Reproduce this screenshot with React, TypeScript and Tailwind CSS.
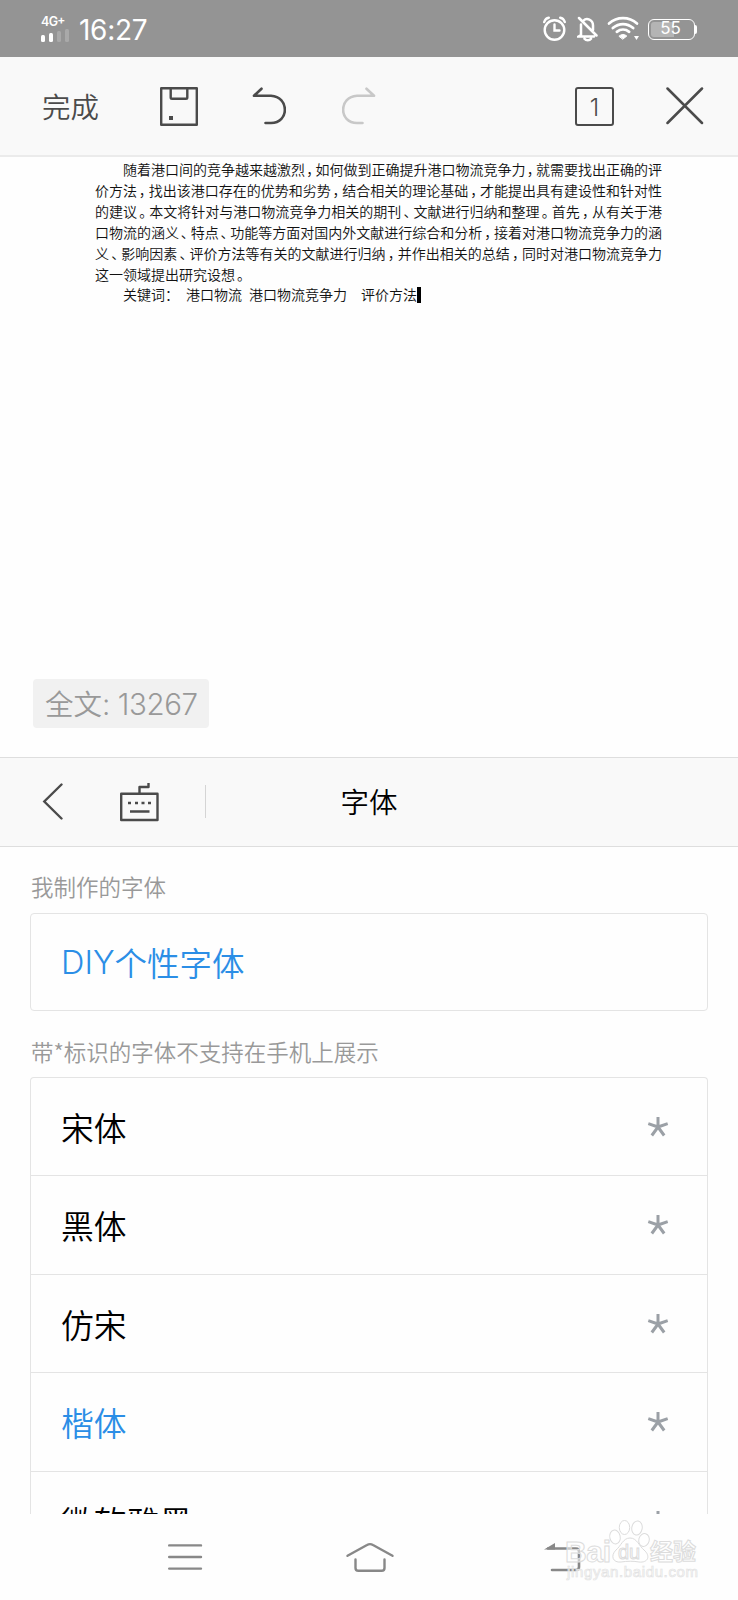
import type { ReactNode } from "react"

const documentLines: { text: string; indent?: boolean }[] = [
    { text: "随着港口间的竞争越来越激烈，如何做到正确提升港口物流竞争力，就需要找出正确的评", indent: true },
    { text: "价方法，找出该港口存在的优势和劣势，结合相关的理论基础，才能提出具有建设性和针对性" },
    { text: "的建议。本文将针对与港口物流竞争力相关的期刊、文献进行归纳和整理。首先，从有关于港" },
    { text: "口物流的涵义、特点、功能等方面对国内外文献进行综合和分析，接着对港口物流竞争力的涵" },
    { text: "义、影响因素、评价方法等有关的文献进行归纳，并作出相关的总结，同时对港口物流竞争力" },
]

const fonts = [
    { name: "宋体", active: false },
    { name: "黑体", active: false },
    { name: "仿宋", active: false },
    { name: "楷体", active: true },
    { name: "微软雅黑", active: false },
]

// Punctuation takes up the slack so both edges of the line stay flush
const DocumentLine = ({ text, indent }: { text: string; indent?: boolean }) => (
    <p className={`flex whitespace-nowrap ${indent ? "pl-7" : ""}`}>
        {text.split(/([，。、])/).map((part, i) => (
            <span key={i} className={i % 2 ? "w-0 flex-1 pr-px text-center [font-feature-settings:'halt']" : "flex-none"}>{part}</span>
        ))}
    </p>
)

const StatusBar = () => (
    <div className="flex h-[57px] flex-none items-center bg-[#949494] text-white">
        <div className="ml-[41px] w-[30px]">
            <p className="font-['Inter'] text-[12.5px] leading-[12px] font-semibold tracking-[-0.7px]">4G<span className="relative -top-[2px] text-[12px]">+</span></p>
            <div className="flex h-[14px] items-end gap-[4px]">
                <div className="h-[7px] w-[4px] rounded-[1.5px] bg-white" />
                <div className="h-[9px] w-[4px] rounded-[1.5px] bg-white" />
                <div className="h-[11px] w-[4px] rounded-[1.5px] bg-white/20" />
                <div className="h-[13px] w-[4px] rounded-[1.5px] bg-white/20" />
            </div>
        </div>
        <span className="ml-[8px] pt-[3px] font-['Inter'] text-[28px] tracking-[-0.3px]">16:27</span>
        <svg className="ml-auto" width="24" height="26" viewBox="0 0 24 26" fill="none" stroke="currentColor" strokeWidth="2.4" strokeLinecap="round">
            <circle cx="11.5" cy="14" r="9.8" />
            <path d="M11.5 8.5V14.5H16.5M1.2 6C2 3.5 4 2 5.8 1.7M21.8 6C21 3.5 19 2 17.2 1.7" />
        </svg>
        <svg className="ml-[10px]" width="22" height="26" viewBox="0 0 22 26" fill="none" stroke="currentColor" strokeWidth="2.5" strokeLinecap="round">
            <path d="M6.5 4.7C9.5 1.5 16 3.5 16 9.5V14M4 8.5V19L1.5 20.5H17M7.5 22.8C9 24.8 12.5 24.8 14 22.8M2 2L19.5 19.5" />
        </svg>
        <svg className="ml-[8px]" width="33" height="26" viewBox="0 0 33 26" fill="none" stroke="currentColor" strokeWidth="2.7" strokeLinecap="round">
            <path d="M2 7.5C10 0.3 22 0.3 30 7.5M5.8 12C12 6.7 20 6.7 26.2 12M9.8 15.8C13.5 13 18.5 13 22.2 15.8" />
            <path d="M12.2 20Q16 16.8 19.8 20L16 23Z" fill="currentColor" strokeWidth="1" />
            <path d="M27 20H32L29.5 24Z" fill="currentColor" stroke="none" />
        </svg>
        <div className="mr-[41px] ml-[8px] flex items-center pt-px">
            <div className="flex h-[21px] w-[47px] rounded-[6px] border-[1.5px] border-white p-[2px]">
                <div className="flex w-full items-center justify-center rounded-[3px] bg-linear-to-r from-white/30 from-55% to-transparent to-55% pr-0.5 font-['Inter'] text-[17px]">55</div>
            </div>
            <div className="h-[9px] w-[2px] rounded-r bg-white" />
        </div>
    </div>
)

const Toolbar = () => (
    <header className="flex h-[100px] flex-none items-center border-b-2 border-[#ebebeb] bg-[#f9f9f9] text-[#4b4b4b]">
        <span className="ml-[42px] w-[60px] text-[28.5px] leading-none font-[350]">完成</span>
        <svg className="ml-[58px] flex-none" width="38" height="40" viewBox="0 0 38 40" fill="none" stroke="currentColor" strokeWidth="2.4" strokeLinejoin="round">
            <path d="M1.2 2.2H36.8V38.8H1.2ZM10.7 2V11.5Q10.7 12.8 12 12.8H26Q27.3 12.8 27.3 11.5V2" />
            <path d="M9 30H13V34H9Z" fill="currentColor" stroke="none" />
        </svg>
        <Undo className="ml-[54px]" />
        <Undo className="ml-[56px] -scale-x-100 text-[#c8c8c8]" />
        <div className="mr-[52px] ml-auto flex size-[39px] items-center justify-center rounded-[3px] border-[2.4px] border-current pt-1 font-['Inter'] text-[24px] font-light">1</div>
        <svg className="mr-[34px]" width="38" height="38" viewBox="0 0 38 38" fill="none" stroke="currentColor" strokeWidth="2.5" strokeLinecap="round">
            <path d="M1.5 1.5L36 36M36 1.5L1.5 36" />
        </svg>
    </header>
)

const Undo = ({ className }: { className: string }) => (
    <svg className={`flex-none ${className}`} width="34" height="38" viewBox="0 0 34 38" fill="none" stroke="currentColor" strokeWidth="2.6" strokeLinecap="round" strokeLinejoin="round">
        <path d="M9.5 1.7L2 8.8H19C37.5 9.8 37.5 36 19 36H13.5" />
    </svg>
)

const Label = ({ children }: { children: ReactNode }) => (
    <p className="ml-px text-[22.5px] leading-[26px] font-[350] whitespace-nowrap text-[#999]">{children}</p>
)

const Asterisk = () => (
    <svg className="mt-px" width="22" height="22" viewBox="0 0 22 22" fill="none" stroke="#9ba0a6" strokeWidth="3">
        <path d="M11 11V1M11 11L1.3 7.7M11 11L20.7 7.7M11 11L4.8 19.5M11 11L17.2 19.5" />
    </svg>
)

const Watermark = () => (
    <div className="absolute top-[3px] right-[34px] w-[140px] font-['Liberation_Sans'] text-white">
        <svg width="138" height="66" viewBox="0 0 138 66" fill="white" fillOpacity=".55" stroke="#dcdcdc" strokeWidth="1">
            <ellipse cx="51" cy="20" rx="5.2" ry="7" transform="rotate(-12 51 20)" />
            <ellipse cx="60.5" cy="10.5" rx="5.2" ry="7" />
            <ellipse cx="73" cy="11" rx="5.2" ry="7" transform="rotate(10 73 11)" />
            <ellipse cx="80" cy="23" rx="5.2" ry="6.5" transform="rotate(15 80 23)" />
            <path d="M66 21C59 21 57 29 52 33C46 39 49 46 57 45C63 44 70 44 75 45C84 46 87 39 80 33C75 29 73 21 66 21Z" />
            <text x="1" y="45" fontSize="30" fontWeight="bold" textLength="46">Bai</text>
            <text x="54" y="42" fontSize="20" textLength="22">du</text>
            <text x="86" y="43" fontSize="23" fontWeight="bold" fontFamily="Noto Sans CJK SC, sans-serif" textLength="46">经验</text>
            <text x="3" y="60" fontSize="15" textLength="131" stroke="#e2e2e2" strokeWidth=".7">jingyan.baidu.com</text>
        </svg>
    </div>
)

const App = () => {
    return (
        <div className="flex h-[1600px] w-[738px] flex-col overflow-hidden bg-[#fefefe] font-['Noto_Sans_CJK_SC',sans-serif] text-black">
            <StatusBar />
            <Toolbar />

            {/* Document */}
            <main className="flex h-[600px] flex-none flex-col pt-[2px]">
                <div className="ml-[95px] w-[567px] text-[14px] leading-[20.9px] font-[350] text-[#111]">
                    {documentLines.map((line) => (
                        <DocumentLine key={line.text} {...line} />
                    ))}
                    <p>这一领域提出研究设想<span className="pl-0.5">。</span></p>
                    <p className="flex items-center pl-7">
                        <span className="w-[63px]">关键词：</span>
                        <span className="w-[63px]">港口物流</span>
                        <span className="w-[112px]">港口物流竞争力</span>
                        <span>评价方法</span>
                        <span className="h-4 w-1 bg-black" />
                    </p>
                </div>
                <div className="mt-auto mb-[29px] ml-[33px] flex h-[49px] w-[176px] items-center rounded-[4px] bg-[#f1f1f1] pl-[12px] text-[28.5px] font-[350] whitespace-nowrap text-[#999]">
                    全文<span className="pt-0.5 font-['Inter'] text-[29.5px] font-light tracking-[-0.4px]">: 13267</span>
                </div>
            </main>

            {/* Panel title */}
            <div className="grid h-[90px] flex-none grid-cols-3 items-center border-y border-[#dedede] bg-[#f9f9f9]">
                <div className="flex items-center text-[#4b4b4b]">
                    <svg className="ml-[42px]" width="21" height="38" viewBox="0 0 21 38" fill="none" stroke="currentColor" strokeWidth="2.4" strokeLinecap="round">
                        <path d="M19.5 1.5L2.3 18.5L19.5 35.5" />
                    </svg>
                    <svg className="ml-[57px]" width="39" height="40" viewBox="0 0 39 40" fill="none" stroke="currentColor" strokeWidth="2.4" strokeLinejoin="round">
                        <path d="M1.2 11.7H37.5V38H1.2ZM19.5 11.5V5H28.5V1" />
                        <path d="M8 21H11M15 21H18M21.5 21H24.5M28 21H31M10 29.5H29.5" />
                    </svg>
                    <div className="mb-0.5 ml-[46px] h-[33px] w-px bg-[#d5d5d5]" />
                </div>
                <h1 className="pb-0.5 text-center text-[28.5px] leading-none font-[350]">字体</h1>
            </div>

            {/* Font list */}
            <section className="min-h-0 flex-1 overflow-hidden px-[30px] pt-[26px]">
                <Label>我制作的字体</Label>
                <div className="mt-[14px] flex h-[98px] items-center rounded-[4px] border border-[#e4e4e4] pl-[30px] text-[32.5px] font-[350] text-[#2b8ee6]">
                    <span className="pt-[3px] font-['Inter'] font-light">DIY</span>个性字体
                </div>
                <div className="mt-[27px]">
                    <Label>带*标识的字体不支持在手机上展示</Label>
                </div>
                <ul className="mt-[13px] rounded-t-[4px] border border-b-0 border-[#e4e4e4]">
                    {fonts.map((font) => (
                        <li key={font.name} className="flex h-[98.5px] items-center justify-between border-b border-[#e4e4e4] pr-[38px] pl-[30px] first:h-[98px]">
                            <span className={`text-[32.8px] font-[350] ${font.active ? "text-[#2b8ee6]" : "text-black"}`}>{font.name}</span>
                            <Asterisk />
                        </li>
                    ))}
                </ul>
            </section>

            {/* System navigation */}
            <nav className="relative flex h-[86px] flex-none items-center pl-[167px] text-[#888]">
                <svg width="36" height="28" viewBox="0 0 36 28" stroke="currentColor" strokeWidth="2.4" strokeLinecap="round">
                    <path d="M2.2 2.4H34M2.2 14H34M2.2 25.6H34" />
                </svg>
                <svg className="ml-[142px]" width="50" height="32" viewBox="0 0 50 32" fill="none" stroke="currentColor" strokeWidth="2.4" strokeLinecap="round" strokeLinejoin="round">
                    <path d="M2.5 14.8L22 4Q25 2.2 28 4L47.5 14.8M10.5 18.5V27Q10.5 29.8 13.3 29.8H36.7Q39.5 29.8 39.5 27V18.5" />
                </svg>
                <svg className="ml-[149px]" width="38" height="30" viewBox="0 0 38 30" fill="none" stroke="currentColor" strokeWidth="2.6" strokeLinecap="round">
                    <path d="M4 6.5H32Q35 6.5 35 9.5V25Q35 28 32 28H8" />
                    <path d="M0 7.5L11 1V7.5Z" fill="currentColor" stroke="none" />
                </svg>
                <Watermark />
            </nav>
        </div>
    )
}
export default App
